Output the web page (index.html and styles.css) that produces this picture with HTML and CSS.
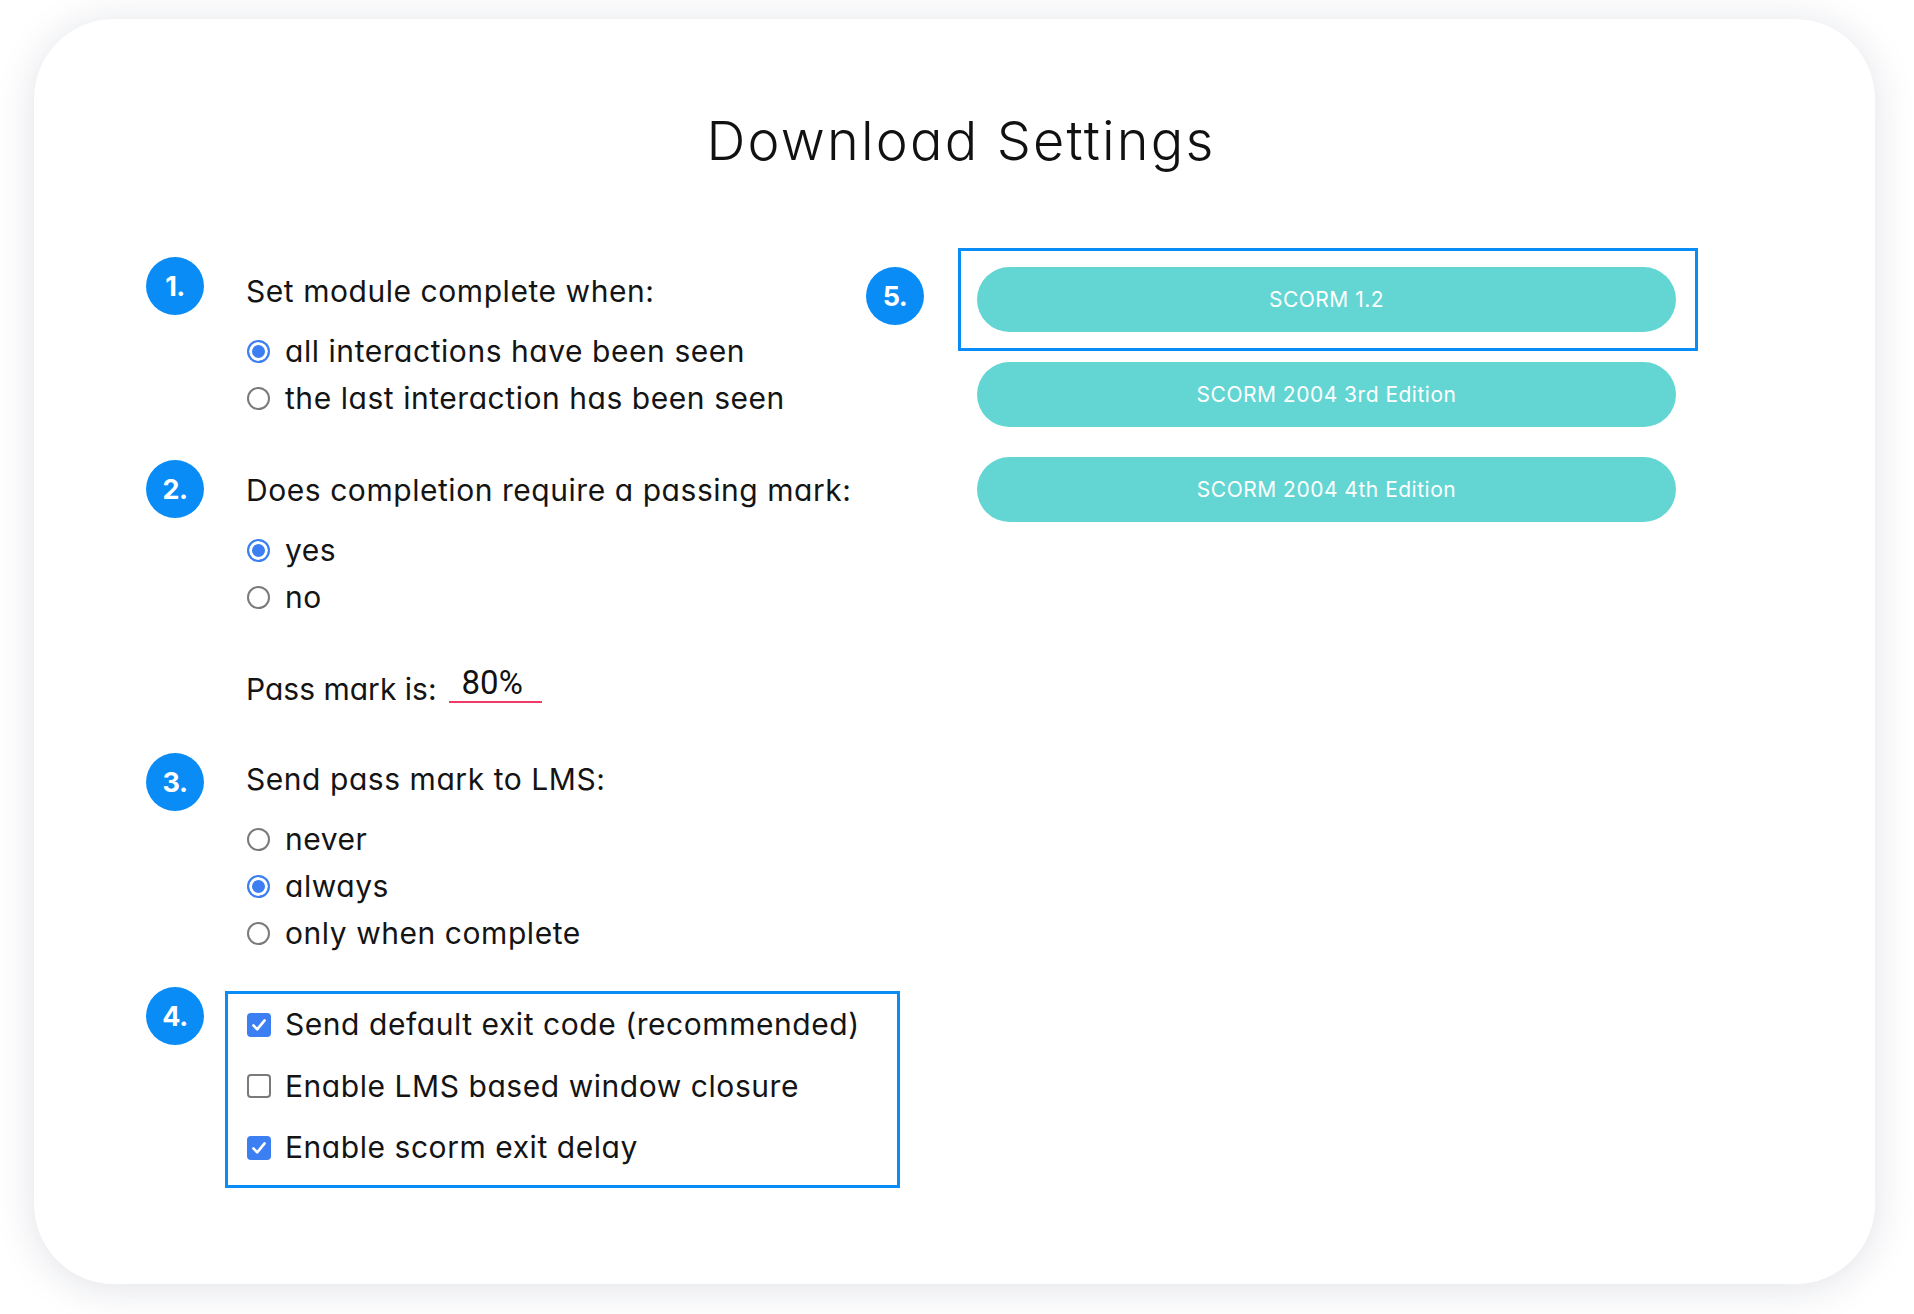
FILE: index.html
```html
<!DOCTYPE html>
<html lang="en">
<head>
<meta charset="utf-8">
<title>Download Settings</title>
<link rel="stylesheet" href="styles.css">
</head>
<body>
<div class="card">
  <h1 class="title">Download Settings</h1>
  <div class="columns">
    <div class="left">
      <section class="step step-1">
        <div class="badge">1.</div>
        <div class="step-body">
          <p class="question">Set module complete when:</p>
          <div class="options">
            <label class="option"><span class="radio checked"></span>all interactions have been seen</label>
            <label class="option"><span class="radio"></span>the last interaction has been seen</label>
          </div>
        </div>
      </section>
      <section class="step step-2">
        <div class="badge">2.</div>
        <div class="step-body">
          <p class="question">Does completion require a passing mark:</p>
          <div class="options">
            <label class="option"><span class="radio checked"></span>yes</label>
            <label class="option"><span class="radio"></span>no</label>
          </div>
          <p class="pass-row">Pass mark is:<span class="pass-input">80%</span></p>
        </div>
      </section>
      <section class="step step-3">
        <div class="badge">3.</div>
        <div class="step-body">
          <p class="question">Send pass mark to LMS:</p>
          <div class="options">
            <label class="option"><span class="radio"></span>never</label>
            <label class="option"><span class="radio checked"></span>always</label>
            <label class="option"><span class="radio"></span>only when complete</label>
          </div>
        </div>
      </section>
      <section class="step step-4">
        <div class="badge">4.</div>
        <div class="step-body">
          <div class="check-box">
            <label class="check-option"><span class="checkbox checked"><svg viewBox="0 0 24 24" width="24" height="24"><path d="M6.4 12.4 L10.2 16.4 L17.6 7.4" fill="none" stroke="#fff" stroke-width="2.6" stroke-linecap="round" stroke-linejoin="round"/></svg></span>Send default exit code (recommended)</label>
            <label class="check-option"><span class="checkbox"></span>Enable LMS based window closure</label>
            <label class="check-option"><span class="checkbox checked"><svg viewBox="0 0 24 24" width="24" height="24"><path d="M6.4 12.4 L10.2 16.4 L17.6 7.4" fill="none" stroke="#fff" stroke-width="2.6" stroke-linecap="round" stroke-linejoin="round"/></svg></span>Enable scorm exit delay</label>
          </div>
        </div>
      </section>
    </div>
    <div class="right">
      <div class="badge badge-5">5.</div>
      <div class="buttons">
        <div class="highlight"><button class="scorm">SCORM 1.2</button></div>
        <button class="scorm scorm-plain scorm-2">SCORM 2004 3rd Edition</button>
        <button class="scorm scorm-plain scorm-3">SCORM 2004 4th Edition</button>
      </div>
    </div>
  </div>
</div>
</body>
</html>
```

FILE: styles.css
```css
* { box-sizing: border-box; }

html, body {
  margin: 0;
  background: #ffffff;
}

body {
  padding: 19px 39px 30px 34px;
  font-family: "Inter", "Noto Sans", sans-serif;
  font-feature-settings: "cv11";
  color: #141414;
}

.card {
  height: 1265px;
  background: #ffffff;
  border-radius: 80px;
  box-shadow: 0 4px 40px rgba(20, 30, 70, 0.13);
  padding: 90px 99px 0 112px;
}

.title {
  margin: 0;
  font-size: 54px;
  line-height: 64px;
  font-weight: 300;
  letter-spacing: 2.2px;
  text-align: center;
  color: #111111;
}

.columns {
  margin-top: 75px;
  display: flex;
  align-items: flex-start;
}

.left {
  width: 720px;
  flex: none;
  padding-top: 9px;
}

.step {
  display: grid;
  grid-template-columns: 58px 1fr;
  column-gap: 42px;
  align-items: start;
}

.badge {
  width: 58px;
  height: 58px;
  border-radius: 50%;
  background: #0a8cf6;
  color: #ffffff;
  font-weight: 700;
  font-size: 27px;
  display: flex;
  align-items: center;
  justify-content: center;
  letter-spacing: -0.5px;
}

.question {
  margin: 0;
  font-size: 30px;
  line-height: 40px;
  letter-spacing: 0.55px;
}

.step-1 .question { margin-top: 14px; }
.step-2 .question { margin-top: 10px; }
.step-3 .question { margin-top: 6px; }

.step-2 { margin-top: 38px; }
.step-3 { margin-top: 40px; }
.step-4 { margin-top: 30px; }

.options {
  margin-top: 17px;
  display: flex;
  flex-direction: column;
}

.option {
  display: flex;
  align-items: center;
  height: 47px;
  font-size: 30px;
  line-height: 47px;
  letter-spacing: 0.55px;
}

.radio {
  width: 23px;
  height: 23px;
  border-radius: 50%;
  border: 2px solid #7a7a7a;
  background: #ffffff;
  margin-left: 1px;
  margin-right: 15px;
  flex: none;
}

.radio.checked {
  border-color: #3b7ff2;
  background: #3b7ff2;
  box-shadow: inset 0 0 0 3px #ffffff;
}

.pass-row {
  margin: 45px 0 0 0;
  font-size: 30px;
  line-height: 47px;
}

.pass-input {
  display: inline-block;
  margin-left: 12px;
  width: 93px;
  padding-left: 13px;
  font-family: "Roboto", "Liberation Sans", sans-serif;
  font-size: 33px;
  line-height: 33px;
  padding-bottom: 2px;
  border-bottom: 2px solid #ef3a6a;
  vertical-align: 6px;
  color: #111111;
}

.check-box {
  margin-top: 4px;
  margin-left: -21px;
  width: 675px;
  border: 3px solid #0a8cf6;
  padding: 0 0 6px 19px;
}

.check-option {
  display: flex;
  align-items: center;
  height: 61.5px;
  font-size: 30px;
  line-height: 61.5px;
  letter-spacing: 0.55px;
}

.checkbox {
  width: 24px;
  height: 24px;
  border-radius: 4px;
  border: 2px solid #7a7a7a;
  background: #ffffff;
  margin-right: 14px;
  flex: none;
  display: flex;
  align-items: center;
  justify-content: center;
}

.checkbox.checked {
  border: none;
  background: #3b7ff2;
}

.right {
  display: flex;
  align-items: flex-start;
  gap: 34px;
}

.badge-5 {
  margin-top: 19px;
}

.buttons {
  display: flex;
  flex-direction: column;
  align-items: flex-start;
}

.highlight {
  border: 3px solid #0a8cf6;
  padding: 16px 19px 16px 16px;
}

.scorm {
  width: 699px;
  height: 65px;
  border: none;
  border-radius: 33px;
  background: #63d6d3;
  color: #ffffff;
  font-family: "Inter", "Noto Sans", sans-serif;
  font-feature-settings: "cv11";
  font-size: 21px;
  font-weight: 400;
  letter-spacing: 0.5px;
  padding: 0;
  cursor: pointer;
}

.scorm-plain {
  margin-left: 19px;
}

.scorm-2 { margin-top: 11px; }
.scorm-3 { margin-top: 30px; }
```
